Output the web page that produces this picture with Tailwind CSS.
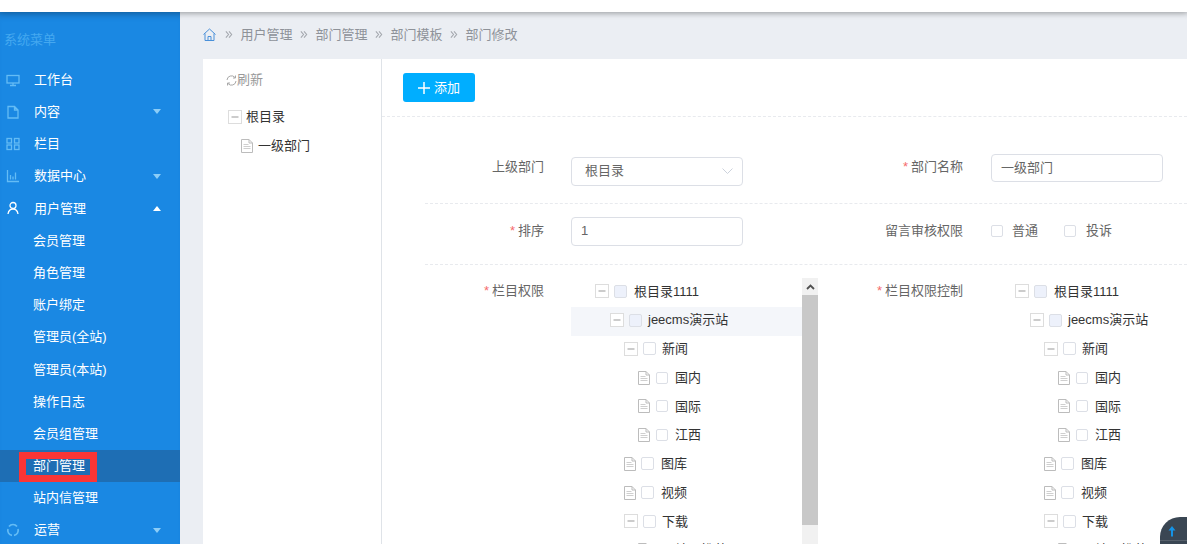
<!DOCTYPE html>
<html lang="zh-CN">
<head>
  <meta charset="UTF-8">
  <meta name="viewport" content="width=device-width, initial-scale=1.0">
  <title>部门修改</title>
  <script src="https://cdn.jsdelivr.net/npm/@tailwindcss/browser@4"></script>
</head>
<body class="h-screen overflow-hidden flex flex-col bg-[#ebeef3] text-[13px] text-[#333] font-['Liberation_Sans','Noto_Sans_CJK_SC',sans-serif]">
  <!-- Shared icons -->
  <svg class="hidden">
    <symbol id="file" viewBox="0 0 12 14"><path d="M.5.5h7.500l3.500 3.500v9.500h-11z M8 .5v3.500h3.500" fill="#fff" stroke="#bcbcbc"/><path d="M2.500 5.500h5M2.500 7.500h7M2.500 9.500h7" stroke="#cfcfcf"/></symbol>
    <symbol id="minus" viewBox="0 0 14 14"><rect x=".5" y=".5" width="13" height="13" fill="#fff" stroke="#ddd"/><path d="M3.500 7h7" stroke="#bbb" stroke-width="1.500"/></symbol>
    <symbol id="crumb" viewBox="0 0 9 9"><path d="M1 1l3 3.500-3 3.500M4.500 1l3 3.500-3 3.500" fill="none" stroke="#a3a7ad" stroke-width="1.200"/></symbol>
    <symbol id="down" viewBox="0 0 8 5"><path d="M0 0h8l-4 5z" fill="#8ccdf7"/></symbol>
  </svg>

  <!-- Top bar -->
  <div class="h-3 shrink-0 bg-white shadow-[0_1px_6px_rgba(0,0,0,0.25)] relative z-10"></div>

  <div class="flex flex-1 min-h-0">
    <!-- Sidebar -->
    <aside class="w-[180px] shrink-0 bg-[#1a88e3] text-white shadow-[inset_0_8px_8px_-6px_rgba(0,0,0,0.14)]">
      <div class="h-[51.500px] pt-[20px] pl-[4px] leading-[15px] text-[#45a8f0]">系统菜单</div>
      <nav>
        <a class="h-[32.200px] flex items-center pl-[6px] pr-[19px]">
          <svg class="w-[14px] h-[14px] mr-[14px]" viewBox="0 0 14 14" fill="none" stroke="#64bcf5" stroke-width="1.300"><rect x="1" y="2.500" width="12" height="7.500"/><path d="M7 10v2.500M4 12.500h6"/></svg>
          <span>工作台</span>
        </a>
        <a class="h-[32.200px] flex items-center pl-[6px] pr-[19px]">
          <svg class="w-[14px] h-[14px] mr-[14px]" viewBox="0 0 14 14" fill="none" stroke="#64bcf5" stroke-width="1.300"><path d="M2 1.500h6.500l3.500 3.500v8h-10z M8.500 1.500v3.500h3.500"/></svg>
          <span class="flex-1">内容</span>
          <svg class="w-2 h-[5px]"><use href="#down"/></svg>
        </a>
        <a class="h-[32.200px] flex items-center pl-[6px] pr-[19px]">
          <svg class="w-[14px] h-[14px] mr-[14px]" viewBox="0 0 14 14" fill="none" stroke="#64bcf5" stroke-width="1.300"><rect x="1" y="1.500" width="4.500" height="4.500"/><rect x="8.500" y="1.500" width="4.500" height="4.500"/><rect x="1" y="8" width="4.500" height="4.500"/><rect x="8.500" y="8" width="4.500" height="4.500"/></svg>
          <span>栏目</span>
        </a>
        <a class="h-[32.200px] flex items-center pl-[6px] pr-[19px]">
          <svg class="w-[14px] h-[14px] mr-[14px]" viewBox="0 0 14 14" fill="none" stroke="#64bcf5" stroke-width="1.300"><path d="M1.500 1v11.500H13M4.500 10.500V6M7 10.500V7.500M9.500 10.500V3.500"/></svg>
          <span class="flex-1">数据中心</span>
          <svg class="w-2 h-[5px]"><use href="#down"/></svg>
        </a>
        <a class="h-[32.200px] flex items-center pl-[6px] pr-[19px]">
          <svg class="w-[14px] h-[14px] mr-[14px]" viewBox="0 0 14 14" fill="none" stroke="#fff" stroke-width="1.300"><circle cx="7" cy="4.500" r="3"/><path d="M2 13c.5-3 2.500-5 5-5s4.500 2 5 5"/></svg>
          <span class="flex-1">用户管理</span>
          <svg class="w-2 h-[5px] rotate-180"><path d="M0 0h8l-4 5z" fill="#fff"/></svg>
        </a>
        <div class="pl-[33px]">
          <a class="h-[32.200px] flex items-center">会员管理</a>
          <a class="h-[32.200px] flex items-center">角色管理</a>
          <a class="h-[32.200px] flex items-center">账户绑定</a>
          <a class="h-[32.200px] flex items-center">管理员(全站)</a>
          <a class="h-[32.200px] flex items-center">管理员(本站)</a>
          <a class="h-[32.200px] flex items-center">操作日志</a>
          <a class="h-[32.200px] flex items-center">会员组管理</a>
        </div>
        <a class="h-[32.200px] flex items-center pl-[33px] bg-[#1e6eb4] relative">
          部门管理
          <!-- Red annotation box drawn over the screenshot -->
          <span class="absolute left-[19px] top-[2px] w-[78px] h-[30px] border-[7px] border-[#fb3535]"></span>
        </a>
        <a class="h-[32.200px] flex items-center pl-[33px]">站内信管理</a>
        <a class="h-[32.200px] flex items-center pl-[6px] pr-[19px]">
          <svg class="w-[14px] h-[14px] mr-[14px]" viewBox="0 0 14 14" fill="none" stroke="#64bcf5" stroke-width="1.700"><path d="M3 3.500a5 5 0 0 1 8 0M12 6a5 5 0 0 1-4 6.400M6 12.400A5 5 0 0 1 2 6"/></svg>
          <span class="flex-1">运营</span>
          <svg class="w-2 h-[5px]"><use href="#down"/></svg>
        </a>
      </nav>
    </aside>

    <main class="flex-1 min-w-0 flex flex-col">
      <!-- Breadcrumb -->
      <div class="h-[47px] shrink-0 pl-[23px] pb-[2px] flex items-center gap-[7.500px] text-[#8e9299] shadow-[inset_0_6px_6px_-6px_rgba(0,0,0,0.18)]">
        <svg class="w-[13px] h-[13px] mr-[1.500px]" viewBox="0 0 13 13" fill="none" stroke="#4a90d9"><path d="M.5 6.500L6.500 1l6 5.500M2 5.500v7h9v-7M5 12.500V8.500h3v4"/></svg>
        <svg class="w-[8px] h-[9px]"><use href="#crumb"/></svg>
        <span>用户管理</span>
        <svg class="w-[8px] h-[9px]"><use href="#crumb"/></svg>
        <span>部门管理</span>
        <svg class="w-[8px] h-[9px]"><use href="#crumb"/></svg>
        <span>部门模板</span>
        <svg class="w-[8px] h-[9px]"><use href="#crumb"/></svg>
        <span>部门修改</span>
      </div>

      <div class="flex-1 min-h-0 ml-[23px] flex bg-white">
        <!-- Department tree -->
        <div class="w-[179px] shrink-0 border-r border-[#dfe3e8] pt-[13px]">
          <div class="pl-[23px] h-4 flex items-center text-[#999]">
            <svg class="w-[11px] h-[11px]" viewBox="0 0 11 11" fill="none" stroke="#a8a8a8"><path d="M1 5A4.500 4.500 0 0 1 9 2.500M10 6a4.500 4.500 0 0 1-8 2.500M9.500.5v2.500H7M1.500 10.500V8H4"/></svg>
            <span>刷新</span>
          </div>
          <div class="mt-[14px] pl-[25px] h-[29px] flex items-center">
            <svg class="w-[14px] h-[14px] mr-[4px]"><use href="#minus"/></svg>
            <span>根目录</span>
          </div>
          <div class="pl-[38px] h-[29px] flex items-center">
            <svg class="w-[12px] h-[14px] mr-[5px]"><use href="#file"/></svg>
            <span>一级部门</span>
          </div>
        </div>

        <div class="flex-1 min-w-0">
          <div class="h-[58px] border-b border-dashed border-[#e8eaee] pt-[14px] pl-[21px]">
            <button class="w-[72px] h-[29px] rounded-[3px] bg-[#00aeff] text-white flex items-center justify-center gap-[4px]">
              <svg class="w-3 h-3" viewBox="0 0 12 12" stroke="#fff" stroke-width="1.500"><path d="M6 0v12M0 6h12"/></svg>
              添加
            </button>
          </div>

          <div class="pl-[43px]">
            <!-- Row 1 -->
            <div class="h-[87px] pt-[37px] border-b border-dashed border-[#e8eaee] flex items-start">
              <div class="w-[420px] flex shrink-0">
                <label class="w-[119px] h-[26px] flex items-center justify-end text-[#666]">上级部门</label>
                <div class="ml-[27px] mt-[3px] w-[172px] h-[29px] rounded-[4px] border border-[#dcdfe6] pl-[13px] pr-[9px] pb-[1px] flex items-center justify-between text-[#666]">
                  根目录
                  <svg class="w-[11px] h-[6px]" viewBox="0 0 11 6" fill="none" stroke="#ccd2dc"><path d="M.5.500l5 5 5-5"/></svg>
                </div>
              </div>
              <div class="flex shrink-0">
                <label class="w-[118px] h-[26px] flex items-center justify-end text-[#666]"><span class="text-[#f56c6c] mr-[3px]">*</span>部门名称</label>
                <div class="ml-[28px] w-[172px] h-[28px] rounded-[4px] border border-[#dcdfe6] pl-[9px] pb-[1px] flex items-center text-[#666]">一级部门</div>
              </div>
            </div>

            <!-- Row 2 -->
            <div class="h-[61px] pt-[13px] border-b border-dashed border-[#e8eaee] flex items-start">
              <div class="w-[420px] flex shrink-0">
                <label class="w-[119px] h-[27px] flex items-center justify-end text-[#666]"><span class="text-[#f56c6c] mr-[3px]">*</span>排序</label>
                <div class="ml-[27px] w-[172px] h-[29px] rounded-[4px] border border-[#dcdfe6] pl-[9px] pb-[1px] flex items-center text-[#666]">1</div>
              </div>
              <div class="flex shrink-0 h-[27px] items-center">
                <label class="w-[118px] flex justify-end text-[#666]">留言审核权限</label>
                <span class="ml-[28px] w-3 h-3 rounded-[2px] border border-[#dcdfe6]"></span>
                <span class="ml-[9px] text-[#666]">普通</span>
                <span class="ml-[26px] w-3 h-3 rounded-[2px] border border-[#dcdfe6]"></span>
                <span class="ml-[10px] text-[#666]">投诉</span>
              </div>
            </div>

            <!-- Row 3: permission trees -->
            <div class="pt-[13px] flex items-start">
              <div class="w-[420px] flex shrink-0">
                <label class="w-[119px] h-[26px] flex items-center justify-end text-[#666]"><span class="text-[#f56c6c] mr-[3px]">*</span>栏目权限</label>
                <div class="ml-[27px] w-[247px] h-[300px] flex">
                  <ul class="w-[231px]">
                    <li class="h-[28.750px] pb-[2px] pl-[24px] flex items-center"><svg class="w-[14px] h-[14px]"><use href="#minus"/></svg><i class="ml-[5px] mr-[7px] w-[13px] h-[13px] rounded-[2px] border border-[#dcdfe6] bg-[#edf1fb]"></i>根目录1111</li>
                    <li class="h-[28.750px] pb-[2px] pl-[39px] flex items-center bg-[#f4f6fa]"><svg class="w-[14px] h-[14px]"><use href="#minus"/></svg><i class="ml-[5px] mr-[6px] w-[13px] h-[13px] rounded-[2px] border border-[#dcdfe6] bg-[#edf1fb]"></i>jeecms演示站</li>
                    <li class="h-[28.750px] pb-[2px] pl-[53px] flex items-center"><svg class="w-[14px] h-[14px]"><use href="#minus"/></svg><i class="ml-[5px] mr-[6px] w-[13px] h-[13px] rounded-[2px] border border-[#dcdfe6]"></i>新闻</li>
                    <li class="h-[28.750px] pb-[2px] pl-[67px] flex items-center"><svg class="w-[12px] h-[14px]"><use href="#file"/></svg><i class="ml-[6px] mr-[7px] w-[12px] h-[12px] rounded-[2px] border border-[#dcdfe6]"></i>国内</li>
                    <li class="h-[28.750px] pb-[2px] pl-[67px] flex items-center"><svg class="w-[12px] h-[14px]"><use href="#file"/></svg><i class="ml-[6px] mr-[7px] w-[12px] h-[12px] rounded-[2px] border border-[#dcdfe6]"></i>国际</li>
                    <li class="h-[28.750px] pb-[2px] pl-[67px] flex items-center"><svg class="w-[12px] h-[14px]"><use href="#file"/></svg><i class="ml-[6px] mr-[7px] w-[12px] h-[12px] rounded-[2px] border border-[#dcdfe6]"></i>江西</li>
                    <li class="h-[28.750px] pb-[2px] pl-[53px] flex items-center"><svg class="w-[12px] h-[14px]"><use href="#file"/></svg><i class="ml-[5px] mr-[7px] w-[13px] h-[13px] rounded-[2px] border border-[#dcdfe6]"></i>图库</li>
                    <li class="h-[28.750px] pb-[2px] pl-[53px] flex items-center"><svg class="w-[12px] h-[14px]"><use href="#file"/></svg><i class="ml-[5px] mr-[7px] w-[13px] h-[13px] rounded-[2px] border border-[#dcdfe6]"></i>视频</li>
                    <li class="h-[28.750px] pb-[2px] pl-[53px] flex items-center"><svg class="w-[14px] h-[14px]"><use href="#minus"/></svg><i class="ml-[5px] mr-[6px] w-[13px] h-[13px] rounded-[2px] border border-[#dcdfe6]"></i>下载</li>
                    <li class="h-[28.750px] pb-[2px] pl-[67px] flex items-center"><svg class="w-[12px] h-[14px]"><use href="#file"/></svg><i class="ml-[6px] mr-[7px] w-[12px] h-[12px] rounded-[2px] border border-[#dcdfe6]"></i>精品推荐</li>
                  </ul>
                  <!-- Scrollbar -->
                  <div class="w-[16px] bg-[#f1f1f1] flex flex-col">
                    <div class="h-[17px] flex items-center justify-center">
                      <svg class="w-[9px] h-[6px]" viewBox="0 0 9 6" fill="none" stroke="#505050" stroke-width="1.800"><path d="M1 5l3.500-3.500 3.500 3.500"/></svg>
                    </div>
                    <div class="h-[230px] bg-[#c8c8c8]"></div>
                  </div>
                </div>
              </div>
              <div class="flex shrink-0">
                <label class="w-[118px] h-[26px] flex items-center justify-end text-[#666]"><span class="text-[#f56c6c] mr-[3px]">*</span>栏目权限控制</label>
                <ul class="ml-[28px] w-[196px] whitespace-nowrap">
                  <li class="h-[28.750px] pb-[2px] pl-[24px] flex items-center"><svg class="w-[14px] h-[14px]"><use href="#minus"/></svg><i class="ml-[5px] mr-[7px] w-[13px] h-[13px] rounded-[2px] border border-[#dcdfe6] bg-[#edf1fb]"></i>根目录1111</li>
                  <li class="h-[28.750px] pb-[2px] pl-[39px] flex items-center"><svg class="w-[14px] h-[14px]"><use href="#minus"/></svg><i class="ml-[5px] mr-[6px] w-[13px] h-[13px] rounded-[2px] border border-[#dcdfe6] bg-[#edf1fb]"></i>jeecms演示站</li>
                  <li class="h-[28.750px] pb-[2px] pl-[53px] flex items-center"><svg class="w-[14px] h-[14px]"><use href="#minus"/></svg><i class="ml-[5px] mr-[6px] w-[13px] h-[13px] rounded-[2px] border border-[#dcdfe6]"></i>新闻</li>
                  <li class="h-[28.750px] pb-[2px] pl-[67px] flex items-center"><svg class="w-[12px] h-[14px]"><use href="#file"/></svg><i class="ml-[6px] mr-[7px] w-[12px] h-[12px] rounded-[2px] border border-[#dcdfe6]"></i>国内</li>
                  <li class="h-[28.750px] pb-[2px] pl-[67px] flex items-center"><svg class="w-[12px] h-[14px]"><use href="#file"/></svg><i class="ml-[6px] mr-[7px] w-[12px] h-[12px] rounded-[2px] border border-[#dcdfe6]"></i>国际</li>
                  <li class="h-[28.750px] pb-[2px] pl-[67px] flex items-center"><svg class="w-[12px] h-[14px]"><use href="#file"/></svg><i class="ml-[6px] mr-[7px] w-[12px] h-[12px] rounded-[2px] border border-[#dcdfe6]"></i>江西</li>
                  <li class="h-[28.750px] pb-[2px] pl-[53px] flex items-center"><svg class="w-[12px] h-[14px]"><use href="#file"/></svg><i class="ml-[5px] mr-[7px] w-[13px] h-[13px] rounded-[2px] border border-[#dcdfe6]"></i>图库</li>
                  <li class="h-[28.750px] pb-[2px] pl-[53px] flex items-center"><svg class="w-[12px] h-[14px]"><use href="#file"/></svg><i class="ml-[5px] mr-[7px] w-[13px] h-[13px] rounded-[2px] border border-[#dcdfe6]"></i>视频</li>
                  <li class="h-[28.750px] pb-[2px] pl-[53px] flex items-center"><svg class="w-[14px] h-[14px]"><use href="#minus"/></svg><i class="ml-[5px] mr-[6px] w-[13px] h-[13px] rounded-[2px] border border-[#dcdfe6]"></i>下载</li>
                  <li class="h-[28.750px] pb-[2px] pl-[67px] flex items-center"><svg class="w-[12px] h-[14px]"><use href="#file"/></svg><i class="ml-[6px] mr-[7px] w-[12px] h-[12px] rounded-[2px] border border-[#dcdfe6]"></i>精品推荐</li>
                </ul>
              </div>
            </div>
          </div>
        </div>
      </div>
    </main>
  </div>

  <!-- Back to top -->
  <div class="fixed right-[-33px] bottom-[-33px] w-[60px] h-[60px] rounded-[20px] bg-[#3a4653] pt-[8px] pl-[8px]">
    <svg class="w-[8px] h-[12px]" viewBox="0 0 8 12" fill="#1593e6"><path d="M4 1l3.500 4.500h-2.500v6h-2v-6h-2.500z"/></svg>
    <div class="mt-[3px] -ml-[8px] h-px bg-[#56606b]"></div>
  </div>
</body>
</html>
